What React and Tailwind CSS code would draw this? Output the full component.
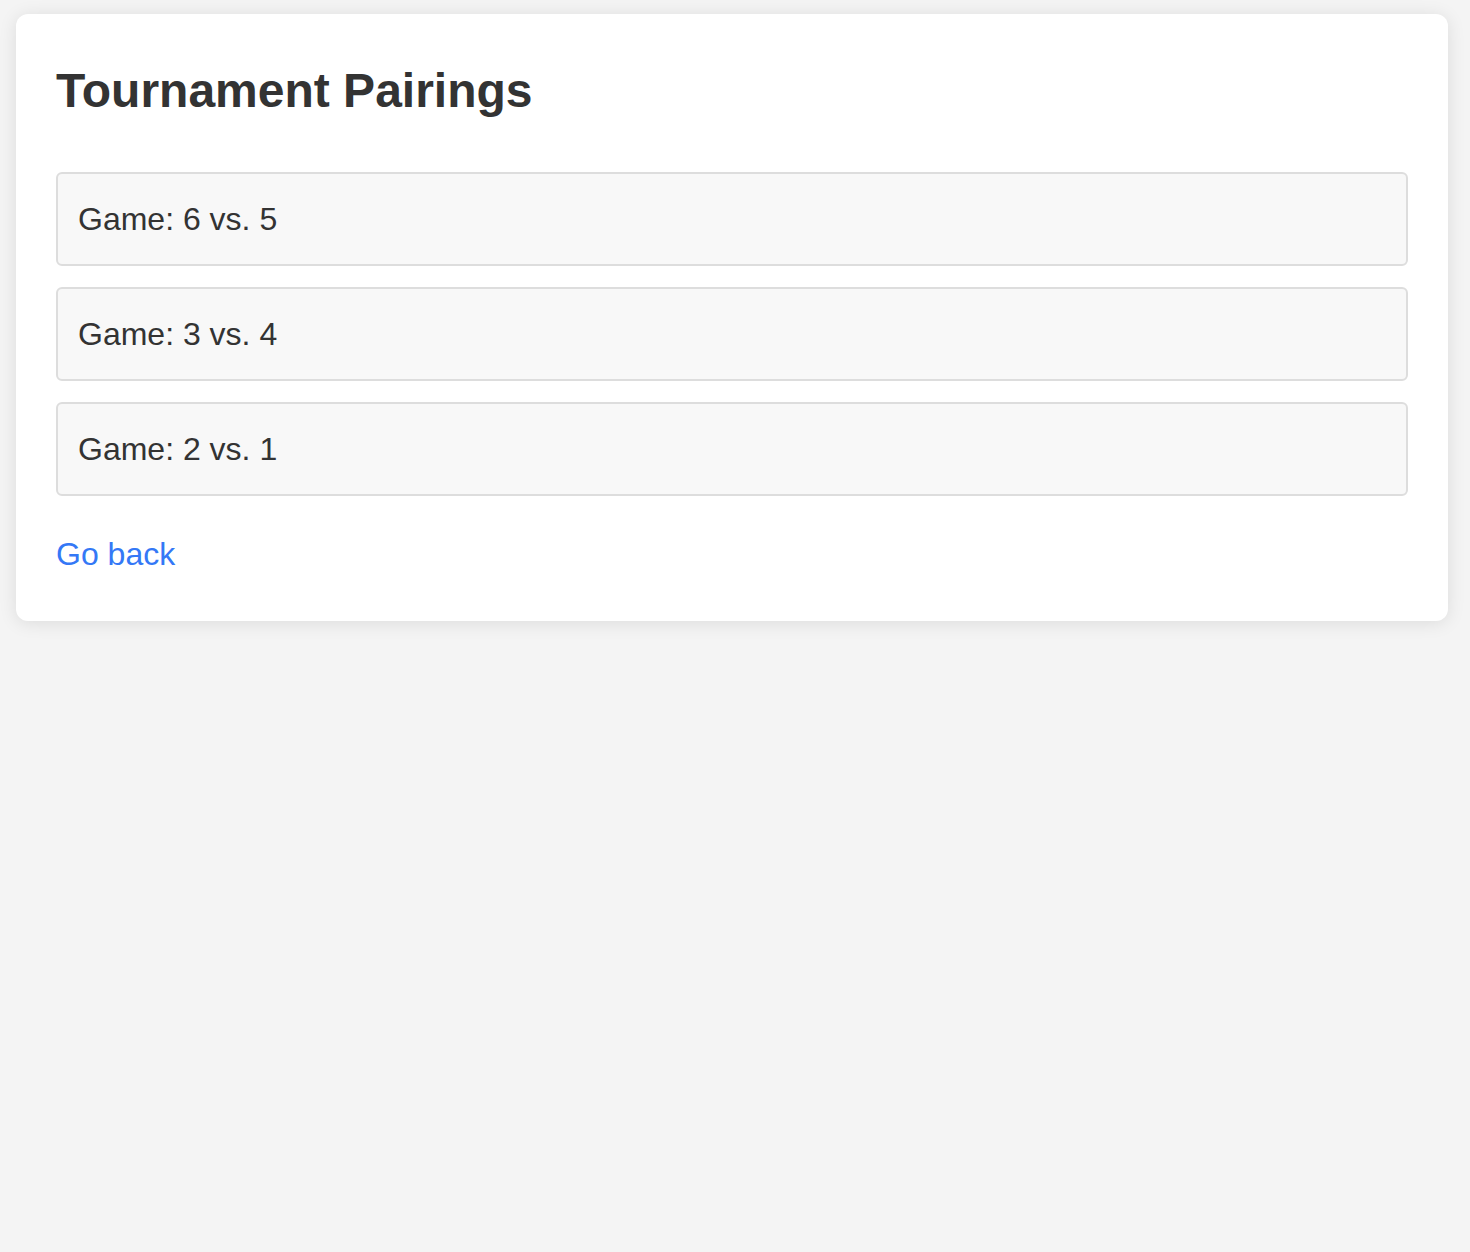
export default function App() {
  const games = ["Game: 6 vs. 5", "Game: 3 vs. 4", "Game: 2 vs. 1"];
  return (
    <div className="min-h-[1252px] bg-[#f4f4f4] pt-[14px] pl-[16px] pr-[22px]" style={{ fontFamily: '"Liberation Sans", Arial, sans-serif' }}>
      <div className="bg-white rounded-[12px] shadow-[0_2px_18px_rgba(0,0,0,0.1)] px-[40px] pt-[49px] pb-[48px]">
        <h1 className="text-[48px] font-bold text-[#333] leading-[1.15] m-0">Tournament Pairings</h1>
        <div className="mt-[54px] flex flex-col gap-[21px]">
          {games.map((g) => (
            <div key={g} className="h-[94px] flex items-center px-[20px] border-2 border-[#dddddd] rounded-[6px] bg-[#f8f8f8] text-[32px] text-[#333]">
              {g}
            </div>
          ))}
        </div>
        <a href="#" className="block w-fit mt-[40px] text-[32px] text-[#3478f6] leading-[1.15]">Go back</a>
      </div>
    </div>
  );
}
